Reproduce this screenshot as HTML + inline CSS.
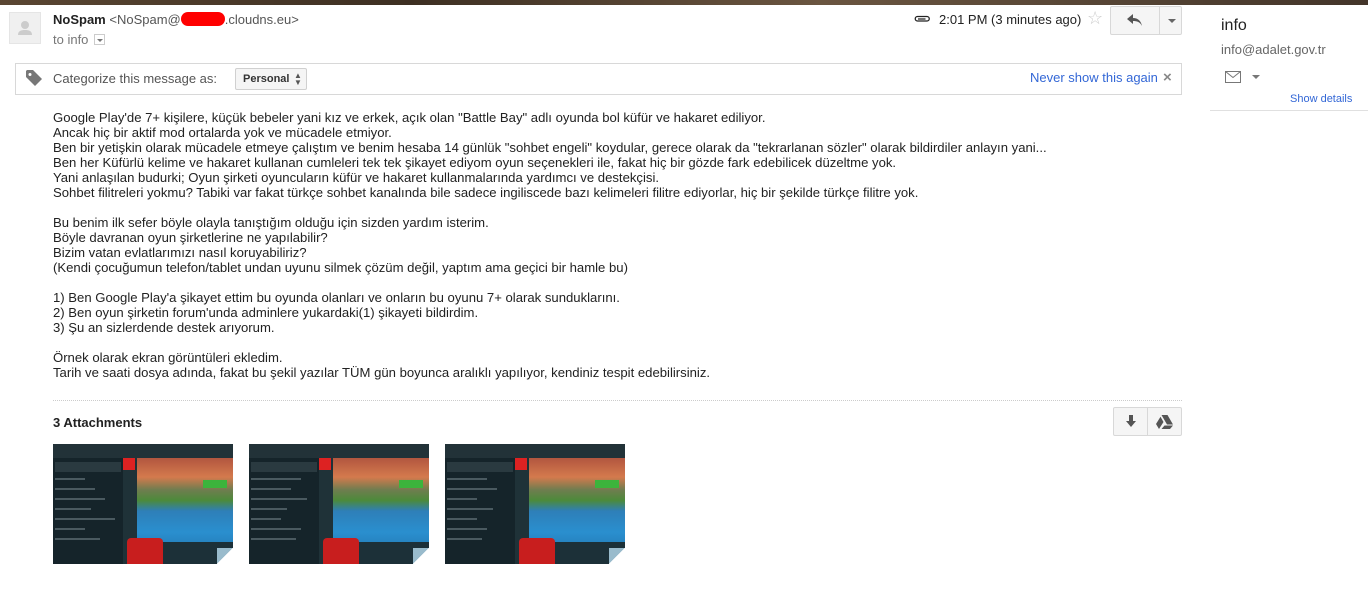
<!DOCTYPE html>
<html><head><meta charset="utf-8"><style>
*{margin:0;padding:0;box-sizing:border-box}
body{width:1368px;height:600px;background:#fff;font-family:"Liberation Sans",Arial,sans-serif;font-size:13px;color:#222;position:relative;overflow:hidden}
.a{position:absolute}
.top{left:0;top:0;width:1368px;height:5px;background:linear-gradient(90deg,#5a4632,#3d2f22 30%,#6a5540 60%,#43352a)}
.av{left:9px;top:12px;width:32px;height:32px;background:#f0f0f0;border:1px solid #e5e5e5}
.body{left:53px;top:110px;line-height:15px;font-size:13.12px;color:#222;white-space:pre}
.thumb{top:444px;width:180px;height:120px;overflow:hidden;background:#1b2a2f}
.thumb .bar{left:0;top:0;width:180px;height:14px;background:#223238}
.thumb .pan{left:0;top:14px;width:70px;height:106px;background:#15242a}
.thumb .ln{left:2px;height:2px;background:#4a5a60}
.thumb .ic{left:70px;top:14px;width:14px;height:106px;background:#1f3238}
.thumb .sc{left:84px;top:14px;width:96px;height:106px;background:linear-gradient(180deg,#b2563f 0%,#d47a4d 18%,#6f7d4f 30%,#4c8a3b 40%,#2e7fb8 50%,#2a8fcf 70%,#1e6ea4 100%)}
.thumb .bt{left:74px;top:94px;width:36px;height:26px;background:#c81e1e;border-radius:4px 4px 0 0}
.thumb .bb{left:110px;top:98px;width:70px;height:22px;background:#1c3038}
.thumb .cl{left:150px;top:36px;width:24px;height:8px;background:#3cb43c}
.thumb .x{left:70px;top:14px;width:12px;height:12px;background:#d22}
.thumb .fold2{right:0;bottom:0;width:16px;height:16px;background:linear-gradient(135deg,#9bc 50%,#fff 50%)}
</style></head><body>
<div class="a top"></div>
<div class="a av"><svg width="30" height="30" viewBox="0 0 30 30"><circle cx="15" cy="12" r="4" fill="#ccc"/><path d="M8 22c0-4 3-5 7-5s7 1 7 5z" fill="#ccc"/></svg></div>
<div class="a" style="left:53px;top:12px;font-size:13px"><b>NoSpam</b> <span style="color:#555">&lt;NoSpam@<span style="display:inline-block;width:44px;height:14px;background:#f00;border-radius:7px;vertical-align:-2px"></span>.cloudns.eu&gt;</span></div>
<div class="a" style="left:53px;top:32px;color:#777">to info <span style="display:inline-block;width:11px;height:11px;border:1px solid #ccc;vertical-align:-1px;position:relative;margin-left:2px"><span style="position:absolute;left:2px;top:4px;border:3px solid transparent;border-top:3px solid #777"></span></span></div>
<svg class="a" style="left:913px;top:14px" width="18" height="10" viewBox="0 0 18 10"><path d="M13 2.5H4.5a2.2 2.2 0 0 0 0 4.5H14a2.2 2.2 0 0 0 0-4.5H13M12.5 5H5" fill="none" stroke="#222" stroke-width="1.3"/></svg>
<div class="a" style="left:939px;top:12px;color:#222">2:01 PM (3 minutes ago)</div>
<div class="a" style="left:1087px;top:8px;color:#ccc;font-size:18px">☆</div>
<div class="a" style="left:1110px;top:6px;width:72px;height:29px;border:1px solid #d8d8d8;border-radius:2px;background:#f5f5f5"><div class="a" style="left:48px;top:0;width:1px;height:27px;background:#d8d8d8"></div><svg class="a" style="left:16px;top:7px" width="16" height="13" viewBox="0 0 16 13"><path d="M6 0L0 5l6 5V7c4 0 7 1 9 5-1-5-4-8-9-8z" fill="#555"/></svg><div class="a" style="left:57px;top:12px;border:4px solid transparent;border-top:4px solid #666"></div></div>
<div class="a" style="left:15px;top:63px;width:1167px;height:32px;border:1px solid #d8d8d8"></div>
<svg class="a" style="left:25px;top:69px" width="18" height="18" viewBox="0 0 18 18"><path d="M1 2v6l9 9 7-7-9-9H2z" fill="#777"/><circle cx="5" cy="5.5" r="1.5" fill="#fff"/></svg>
<div class="a" style="left:53px;top:71px;color:#555">Categorize this message as:</div>
<div class="a" style="left:235px;top:68px;width:72px;height:22px;border:1px solid #d0d0d0;border-radius:2px;background:#f5f5f5;font-size:11px;font-weight:bold;color:#333;padding:4px 0 0 7px">Personal<span style="position:absolute;left:58px;top:3px;font-size:8px;line-height:7px;color:#555">▲<br>▼</span></div>
<div class="a" style="left:1030px;top:70px;color:#3367d6">Never show this again</div>
<div class="a" style="left:1163px;top:69px;color:#888;font-size:15px;font-weight:bold">×</div>
<div class="a body">Google Play'de 7+ kişilere, küçük bebeler yani kız ve erkek, açık olan "Battle Bay" adlı oyunda bol küfür ve hakaret ediliyor.
Ancak hiç bir aktif mod ortalarda yok ve mücadele etmiyor.
Ben bir yetişkin olarak mücadele etmeye çalıştım ve benim hesaba 14 günlük "sohbet engeli" koydular, gerece olarak da "tekrarlanan sözler" olarak bildirdiler anlayın yani...
Ben her Küfürlü kelime ve hakaret kullanan cumleleri tek tek şikayet ediyom oyun seçenekleri ile, fakat hiç bir gözde fark edebilicek düzeltme yok.
Yani anlaşılan budurki; Oyun şirketi oyuncuların küfür ve hakaret kullanmalarında yardımcı ve destekçisi.
Sohbet filitreleri yokmu? Tabiki var fakat türkçe sohbet kanalında bile sadece ingiliscede bazı kelimeleri filitre ediyorlar, hiç bir şekilde türkçe filitre yok.

Bu benim ilk sefer böyle olayla tanıştığım olduğu için sizden yardım isterim.
Böyle davranan oyun şirketlerine ne yapılabilir?
Bizim vatan evlatlarımızı nasıl koruyabiliriz?
(Kendi çocuğumun telefon/tablet undan uyunu silmek çözüm değil, yaptım ama geçici bir hamle bu)

1) Ben Google Play'a şikayet ettim bu oyunda olanları ve onların bu oyunu 7+ olarak sunduklarını.
2) Ben oyun şirketin forum'unda adminlere yukardaki(1) şikayeti bildirdim.
3) Şu an sizlerdende destek arıyorum.

Örnek olarak ekran görüntüleri ekledim.
Tarih ve saati dosya adında, fakat bu şekil yazılar TÜM gün boyunca aralıklı yapılıyor, kendiniz tespit edebilirsiniz.</div>
<div class="a" style="left:53px;top:400px;width:1129px;border-top:1px dotted #ccc"></div>
<div class="a" style="left:53px;top:415px;font-weight:bold;color:#222">3 Attachments</div>
<div class="a" style="left:1113px;top:407px;width:69px;height:29px;border:1px solid #d8d8d8;border-radius:2px;background:#f5f5f5"><div class="a" style="left:33px;top:0;width:1px;height:27px;background:#d8d8d8"></div><svg class="a" style="left:11px;top:7px" width="12" height="13" viewBox="0 0 12 13"><path d="M4 0h4v6h3l-5 6-5-6h3z" fill="#555"/></svg><svg class="a" style="left:42px;top:7px" width="17" height="14" viewBox="0 0 17 14"><path d="M5.5 0h6l5.5 9.5h-6zM4.5 1.8L7.5 7 3 14 0 9zM8.5 10.5h8.5L14 14H5.5z" fill="#555"/></svg></div>
<div class="a thumb" style="left:53px"><div class="a bar"></div><div class="a pan"></div><div class="a ln" style="top:18px;width:66px;height:10px;background:#2a3a40"></div><div class="a ln" style="top:34px;width:30px"></div><div class="a ln" style="top:44px;width:40px"></div><div class="a ln" style="top:54px;width:50px"></div><div class="a ln" style="top:64px;width:36px"></div><div class="a ln" style="top:74px;width:60px"></div><div class="a ln" style="top:84px;width:30px"></div><div class="a ln" style="top:94px;width:45px"></div><div class="a ic"></div><div class="a x"></div><div class="a sc"></div><div class="a cl"></div><div class="a bb"></div><div class="a bt"></div><div class="a fold2"></div></div>
<div class="a thumb" style="left:249px"><div class="a bar"></div><div class="a pan"></div><div class="a ln" style="top:18px;width:66px;height:10px;background:#2a3a40"></div><div class="a ln" style="top:34px;width:50px"></div><div class="a ln" style="top:44px;width:40px"></div><div class="a ln" style="top:54px;width:56px"></div><div class="a ln" style="top:64px;width:36px"></div><div class="a ln" style="top:74px;width:30px"></div><div class="a ln" style="top:84px;width:50px"></div><div class="a ln" style="top:94px;width:45px"></div><div class="a ic"></div><div class="a x"></div><div class="a sc"></div><div class="a cl"></div><div class="a bb"></div><div class="a bt"></div><div class="a fold2"></div></div>
<div class="a thumb" style="left:445px"><div class="a bar"></div><div class="a pan"></div><div class="a ln" style="top:18px;width:66px;height:10px;background:#2a3a40"></div><div class="a ln" style="top:34px;width:40px"></div><div class="a ln" style="top:44px;width:50px"></div><div class="a ln" style="top:54px;width:30px"></div><div class="a ln" style="top:64px;width:46px"></div><div class="a ln" style="top:74px;width:30px"></div><div class="a ln" style="top:84px;width:40px"></div><div class="a ln" style="top:94px;width:35px"></div><div class="a ic"></div><div class="a x"></div><div class="a sc"></div><div class="a cl"></div><div class="a bb"></div><div class="a bt"></div><div class="a fold2"></div></div>
<div class="a" style="left:1221px;top:17px;font-size:16px;color:#222">info</div>
<div class="a" style="left:1221px;top:42px;font-size:13px;color:#666">info@adalet.gov.tr</div>
<svg class="a" style="left:1225px;top:71px" width="16" height="12" viewBox="0 0 16 12"><rect x="0.5" y="0.5" width="15" height="11" fill="none" stroke="#777"/><path d="M0.5 0.5l7.5 6 7.5-6" fill="none" stroke="#777"/></svg>
<div class="a" style="left:1252px;top:75px;border:4px solid transparent;border-top:4px solid #777"></div>
<div class="a" style="left:1290px;top:93px;font-size:11px;color:#3367d6">Show details</div>
<div class="a" style="left:1210px;top:110px;width:158px;height:1px;background:#e0e0e0"></div>
</body></html>
